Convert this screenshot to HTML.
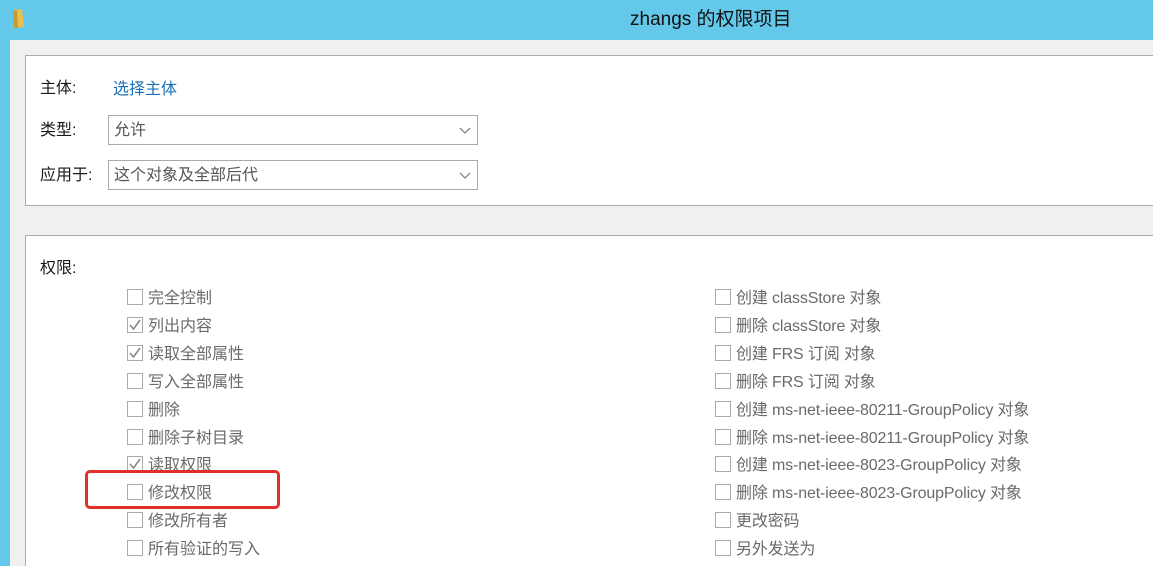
<!DOCTYPE html>
<html><head><meta charset="utf-8"><style>
*{margin:0;padding:0;box-sizing:border-box}
html,body{width:1153px;height:566px;overflow:hidden}
body{background:#63c8e9;position:relative;font-family:"Liberation Sans","Noto Sans CJK SC",sans-serif;font-size:16px;color:#1a1a1a;line-height:1.2}
.title{position:absolute;left:630px;top:9px;font-size:19px;color:#111}
.main{position:absolute;left:10px;top:40px;width:1143px;height:526px;background:#f0f0f0}
.panel{position:absolute;left:25px;width:1130px;background:#fff;border:1px solid #adadad}
.t{position:absolute;white-space:nowrap}
.combo{position:absolute;left:108px;width:370px;height:30px;border:1px solid #aaa;background:#fff;color:#555;padding:5px 0 0 5px}
.combo svg{position:absolute;right:6px;top:11px}
.cb{position:absolute;width:16px;height:16px;border:1px solid #aaa;background:#fff}
.lb{position:absolute;color:#6a6a6a;white-space:nowrap}
</style></head><body>
<svg style="position:absolute;left:11px;top:8px" width="16" height="22"><path d="M2 2 L11 1 L13 19 L3 20 Z" fill="#e8c050"/><path d="M2 2 L6 3 L7 20 L3 20Z" fill="#c99a2e"/></svg>
<div class="title">zhangs 的权限项目</div>
<div class="main"></div>
<div class="panel" style="top:55px;height:151px"></div>
<div class="panel" style="top:235px;height:340px"></div>
<div class="t" style="left:40px;top:79px">主体:</div>
<div class="t" style="left:113px;top:80px;color:#1a6fb7">选择主体</div>
<div class="t" style="left:40px;top:121px">类型:</div>
<div class="t" style="left:40px;top:166px">应用于:</div>
<div class="combo" style="top:115px">允许<svg width="12" height="8"><path d="M1 1 L6 6 L11 1" stroke="#888" fill="none" stroke-width="1.3"/></svg></div>
<div class="combo" style="top:160px">这个对象及全部后代<svg width="12" height="8"><path d="M1 1 L6 6 L11 1" stroke="#888" fill="none" stroke-width="1.3"/></svg></div>
<div class="t" style="left:40px;top:259px">权限:</div>
<div id="rows"></div>
<div style="position:absolute;left:85px;top:470px;width:195px;height:39px;border:3px solid #e0302a;border-radius:5px"></div>
<script>
var L=[["完全控制",0],["列出内容",1],["读取全部属性",1],["写入全部属性",0],["删除",0],["删除子树目录",0],["读取权限",1],["修改权限",0],["修改所有者",0],["所有验证的写入",0]];
var R=["创建 classStore 对象","删除 classStore 对象","创建 FRS 订阅 对象","删除 FRS 订阅 对象","创建 ms-net-ieee-80211-GroupPolicy 对象","删除 ms-net-ieee-80211-GroupPolicy 对象","创建 ms-net-ieee-8023-GroupPolicy 对象","删除 ms-net-ieee-8023-GroupPolicy 对象","更改密码","另外发送为"];
var h="";
for(var i=0;i<10;i++){var y=Math.round(297+i*27.9);
h+='<div class="cb" style="left:127px;top:'+(y-8)+'px">'+(L[i][1]?'<svg width="14" height="14" style="position:absolute;left:0;top:0"><path d="M2 7 L5.5 11 L12 2" stroke="#888" stroke-width="1.6" fill="none"/></svg>':'')+'</div>';
h+='<div class="lb" style="left:148px;top:'+(y-8)+'px">'+L[i][0]+'</div>';
h+='<div class="cb" style="left:715px;top:'+(y-8)+'px"></div>';
h+='<div class="lb" style="left:736px;top:'+(y-8)+'px;letter-spacing:-0.15px">'+R[i]+'</div>';}
document.getElementById("rows").innerHTML=h;
</script>
</body></html>
